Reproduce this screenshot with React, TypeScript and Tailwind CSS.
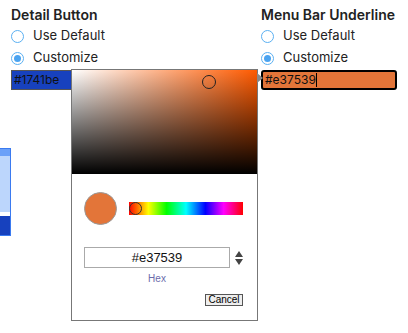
import React from "react";

function Radio({ checked, label }: { checked?: boolean; label: string }) {
  return (
    <div className="flex items-center h-[22px]">
      <span className="w-[13px] h-[13px] rounded-full border-[1.5px] border-[#5ab0f2] flex items-center justify-center bg-white">
        {checked && <span className="w-[7px] h-[7px] rounded-full bg-[#4aa3f0]" />}
      </span>
      <span className="ml-[9px] text-[13px] text-[#222]">{label}</span>
    </div>
  );
}

export default function App() {
  const font = { fontFamily: "Inter, 'Open Sans', sans-serif" };
  return (
    <div className="relative w-[408px] h-[333px] bg-white overflow-hidden" style={font}>
      <div className="flex pt-[5px]">
        <div className="w-[250px] pl-[11px]">
          <div className="text-[14px] font-semibold text-[#222] leading-[20px]">Detail Button</div>
          <div>
            <Radio label="Use Default" />
            <Radio checked label="Customize" />
          </div>
          <div className="mt-[1px] w-[61px] h-[20px] bg-[#1741be] border border-[#555] text-[12px] text-[#111] leading-[18px] pl-[2px]">#1741be</div>
          <div className="mt-[58px] -ml-[11px] w-[11px] h-[88px] border border-[#3a7af0] border-l-0 flex flex-col">
            <div className="h-[7px] bg-[#6aa0f8]" />
            <div className="flex-1 bg-[#bcd6fc]" />
            <div className="h-[4px] bg-white" />
            <div className="h-[19px] bg-[#1741be]" />
          </div>
        </div>
        <div className="pl-[11px]">
          <div className="text-[14px] font-semibold text-[#222] leading-[20px]">Menu Bar Underline</div>
          <div>
            <Radio label="Use Default" />
            <Radio checked label="Customize" />
          </div>
          <div className="mt-[1px] w-[136px] h-[20px] bg-[#e37539] border-2 border-black rounded-[3px] text-[12px] text-[#111] leading-[16px] pl-[2px] flex items-center">
            <span>#e37539</span>
            <span className="w-[1px] h-[14px] bg-black" />
          </div>
        </div>
      </div>

      {/* Color picker popover */}
      <div className="absolute left-[71px] top-[69px] w-[187px] h-[252px] bg-white border border-[#777] flex flex-col" style={{ fontFamily: "'Liberation Sans', Arial, sans-serif" }}>
        <div className="relative h-[104px] w-full" style={{ background: "linear-gradient(to top, #000, rgba(0,0,0,0)), linear-gradient(to right, #fff, #ff5a00)" }}>
          <span className="absolute left-[130px] top-[5px] w-[14px] h-[14px] rounded-full border border-[#222]" />
        </div>
        <div className="flex items-center mt-[18px] pl-[12px]">
          <div className="w-[33px] h-[33px] rounded-full bg-[#e37539] border border-[#999]" />
          <div className="relative ml-[12px] w-[114px] h-[13px]" style={{ background: "linear-gradient(to right, #f00, #ff0 17%, #0f0 33%, #0ff 50%, #00f 67%, #f0f 83%, #f00)" }}>
            <span className="absolute left-[0px] top-[0px] w-[13px] h-[13px] rounded-full border border-[#333]" />
          </div>
        </div>
        <div className="flex items-center mt-[22px] pl-[12px]">
          <div className="w-[146px] h-[21px] border border-[#aaa] flex items-center justify-center text-[13px] text-[#111]">#e37539</div>
          <div className="ml-[5px] flex flex-col items-center">
            <svg width="8" height="14" viewBox="0 0 8 14">
              <path d="M4 0 L8 6 L0 6 Z" fill="#444" />
              <path d="M0 8 L8 8 L4 14 Z" fill="#444" />
            </svg>
          </div>
        </div>
        <div className="ml-[12px] w-[146px] text-center text-[10px] text-[#6b6bab] mt-[3px]">Hex</div>
        <div className="flex justify-end pr-[14px] mt-[8px]">
          <button className="h-[12px] w-[38px] border border-[#555] bg-[#eee] text-[10px] leading-[10px] text-black">Cancel</button>
        </div>
      </div>
      {/* arrow pointer */}
      <svg className="absolute left-[257px] top-[73px]" width="6" height="10" viewBox="0 0 6 10">
        <path d="M0 0 L6 5 L0 10 Z" fill="#888" />
      </svg>
    </div>
  );
}
